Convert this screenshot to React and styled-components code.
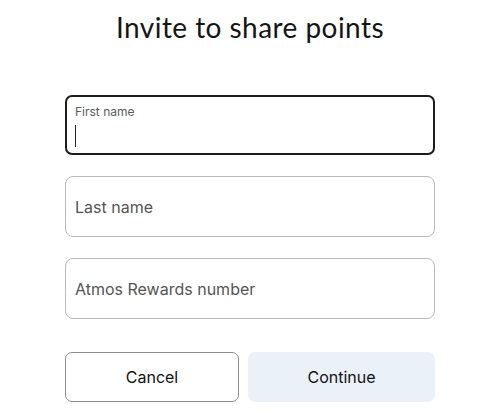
import React from "react";
import styled, { createGlobalStyle } from "styled-components";

const Global = createGlobalStyle`
  html, body { margin: 0; padding: 0; background: #fff; }
  body { font-family: "Inter", "Noto Sans", sans-serif; color: #111; }
`;

const Page = styled.div`
  width: 370px;
  margin: 0 auto;
  padding-top: 10px;
  display: flex;
  flex-direction: column;
`;

const Title = styled.h1`
  margin: 0 0 51px;
  font-family: "Lato", "Noto Sans", sans-serif;
  font-size: 28px;
  line-height: 34px;
  font-weight: 400;
  text-align: center;
  color: #151515;
  letter-spacing: 0.45px;
`;

const Fields = styled.div`
  display: flex;
  flex-direction: column;
  gap: 21px;
`;

const Field = styled.div`
  box-sizing: border-box;
  height: ${(p) => (p.$focused ? 60 : 61)}px;
  border: ${(p) => (p.$focused ? "2px solid #1c1c1c" : "1px solid #b9b9b9")};
  border-radius: ${(p) => (p.$focused ? 7 : 8)}px;
  padding: 0 ${(p) => (p.$focused ? 8 : 9)}px;
  display: flex;
  flex-direction: column;
  justify-content: ${(p) => (p.$focused ? "flex-start" : "center")};
`;

const SmallLabel = styled.div`
  margin-top: 8px;
  font-size: 12px;
  line-height: 14px;
  color: #5a5a5a;
`;

const Caret = styled.div`
  margin-top: 6px;
  width: 1px;
  height: 22px;
  background: #222;
`;

const Placeholder = styled.div`
  font-size: 16px;
  line-height: 20px;
  color: #555;
`;

const Buttons = styled.div`
  margin-top: 33px;
  display: grid;
  grid-template-columns: 174px 1fr;
  gap: 9px;
`;

const Button = styled.button`
  box-sizing: border-box;
  height: 50px;
  border-radius: 7px;
  font-family: inherit;
  font-size: 16px;
  color: #111;
  cursor: pointer;
  border: ${(p) => (p.$primary ? "none" : "1px solid #8c8c8c")};
  background: ${(p) => (p.$primary ? "#eaf1f8" : "#fff")};
`;

export default function App() {
  return (
    <>
      <Global />
      <Page>
        <Title>Invite to share points</Title>
        <Fields>
          <Field $focused>
            <SmallLabel>First name</SmallLabel>
            <Caret />
          </Field>
          <Field>
            <Placeholder>Last name</Placeholder>
          </Field>
          <Field>
            <Placeholder>Atmos Rewards number</Placeholder>
          </Field>
        </Fields>
        <Buttons>
          <Button>Cancel</Button>
          <Button $primary>Continue</Button>
        </Buttons>
      </Page>
    </>
  );
}
